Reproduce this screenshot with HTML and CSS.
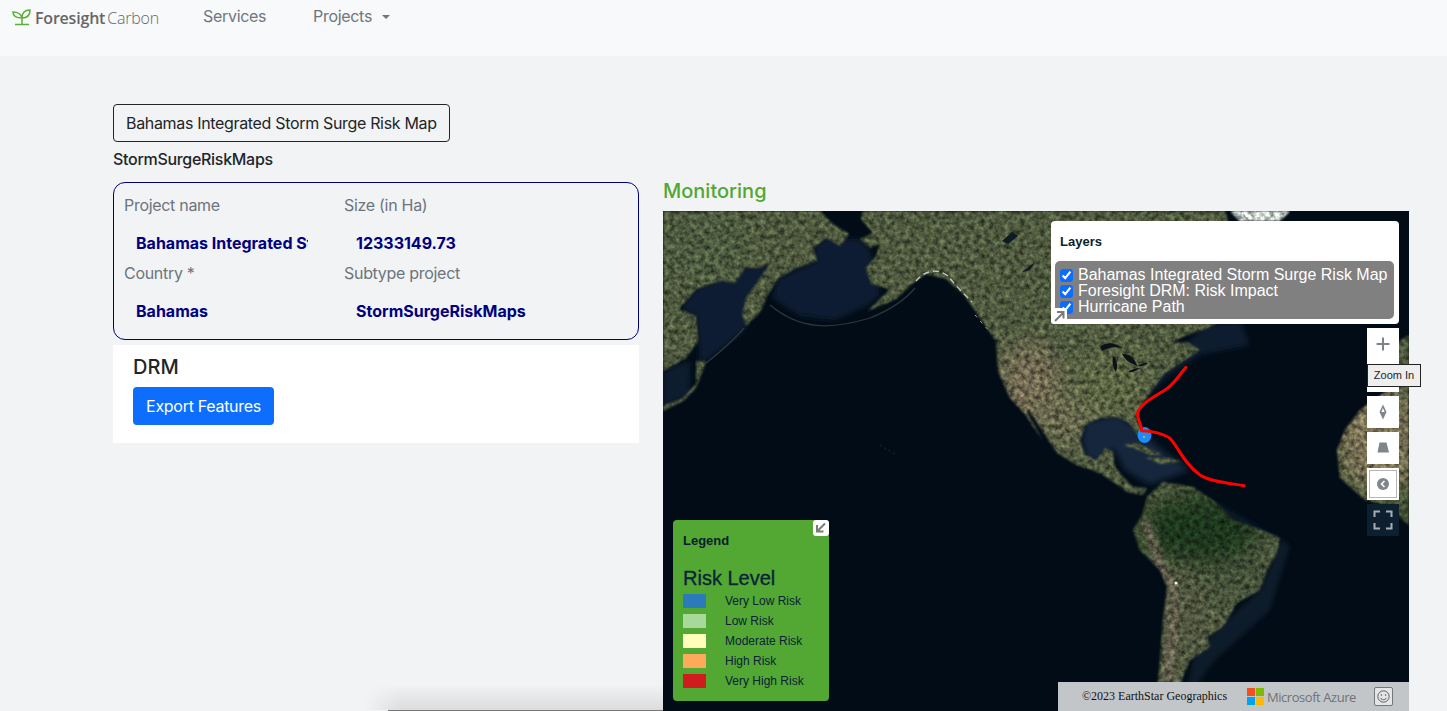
FILE: index.html
```html
<!DOCTYPE html>
<html lang="en">
<head>
    <meta charset="UTF-8">
    <meta name="viewport" content="width=device-width, initial-scale=1.0">
    <title>Foresight Carbon</title>
    <link rel="stylesheet" href="styles.css">
</head>
<body>

    <nav class="navbar">
        <a class="brand">
            <svg class="brand-icon" viewBox="0 0 20 18" width="20" height="18">
                <path d="M10 9 C9 5 6 3 1 3 C1 7 4 9 10 9 Z M10 9 C10 4 13 1 18 1 C18 6 15 9 10 9 Z M10 9 V15 M3 15.5 H17" fill="none" stroke="#5cb038" stroke-width="1.5"/>
            </svg>
            <span class="brand-bold">Foresight</span><span class="brand-thin">Carbon</span>
        </a>
        <a class="nav-link services">Services</a>
        <a class="nav-link">Projects <span class="caret"></span></a>
    </nav>

    <main class="main">
        <section class="left-col">
            <div class="title-box">Bahamas Integrated Storm Surge Risk Map</div>
            <div class="subtype">StormSurgeRiskMaps</div>

            <div class="info-card">
                <div class="info-item">
                    <label>Project name</label>
                    <div class="info-value">Bahamas Integrated Storm Surge Risk Map</div>
                </div>
                <div class="info-item">
                    <label>Size (in Ha)</label>
                    <div class="info-value">12333149.73</div>
                </div>
                <div class="info-item">
                    <label>Country *</label>
                    <div class="info-value">Bahamas</div>
                </div>
                <div class="info-item">
                    <label>Subtype project</label>
                    <div class="info-value">StormSurgeRiskMaps</div>
                </div>
            </div>

            <div class="drm-box">
                <h2>DRM</h2>
                <button type="button" class="btn-export">Export Features</button>
            </div>
        </section>

        <section class="right-col">
            <h3 class="monitoring">Monitoring</h3>
            <div class="map">
                <svg class="map-img" viewBox="663 211 746 500" width="746" height="500">
                    <defs>
                        <mask id="land" maskUnits="userSpaceOnUse" x="663" y="211" width="746" height="500">
                            <g fill="#fff" filter="url(#blur1)">
                                <path d="M663 211 L820 211 L833 224 L849 234 L840 246 L826 238 L813 248 L817 261 L796 268 L778 278 L766 298 L761 311 L746 326 L742 314 L746 298 L760 278 L770 263 L758 268 L745 268 L735 283 L720 281 L696 289 L679 309 L696 316 L698 341 L686 358 L663 371 Z"/>
                                <path d="M706 361 L696 361 L696 384 L683 398 L663 406 L663 411 L683 401 L696 388 L703 370 Z"/>
                                <path d="M863 211 L861 219 L873 233 L860 239 L870 248 L880 244 L876 256 L866 268 L871 284 L890 289 L868 311 L896 299 L913 283 L926 274 L946 279 L963 294 L980 318 L996 341 L998 371 L1010 398 L1025 414 L1043 441 L1027 412 L1029 410 L1057 453 L1077 465 L1100 473 L1115 483 L1127 492 L1143 495 L1147 488 L1133 487 L1123 477 L1115 467 L1113 452 L1105 448 L1097 460 L1085 455 L1080 440 L1085 425 L1100 418 L1117 417 L1128 422 L1138 435 L1141 430 L1136 417 L1140 407 L1152 390 L1163 375 L1180 363 L1200 350 L1187 342 L1170 343 L1187 335 L1208 328 L1217 323 L1230 300 L1240 260 L1225 211 Z"/>
                                <path d="M1163 482 L1193 487 L1217 503 L1233 520 L1257 528 L1280 538 L1277 553 L1267 570 L1260 590 L1237 603 L1223 627 L1207 637 L1210 647 L1190 660 L1183 677 L1173 711 L1155 711 L1160 660 L1163 620 L1167 587 L1160 570 L1140 550 L1133 530 L1143 513 L1147 497 Z"/>
                                <path d="M1409 335 L1398 342 L1385 392 L1360 410 L1345 430 L1337 450 L1340 478 L1365 500 L1385 505 L1409 525 Z"/>
                                <path d="M1123 445 L1137 443 L1150 449 L1163 455 L1150 455 L1136 449 Z"/>
                                <path d="M1145 458 L1170 458 L1182 462 L1160 464 Z"/>
                                <path d="M1230 211 L1290 211 L1280 221 L1240 221 Z"/>
                            </g>
                        </mask>
                        <filter id="terrain" x="0" y="0" width="100%" height="100%" color-interpolation-filters="sRGB">
                            <feTurbulence type="fractalNoise" baseFrequency=".2" numOctaves="4" seed="7" result="noise"/>
                            <feColorMatrix in="noise" type="matrix" values=".75 0 0 0 .12  .75 0 0 0 .12  .75 0 0 0 .12  0 0 0 0 1" result="gray"/>
                            <feBlend in="SourceGraphic" in2="gray" mode="multiply" result="mix"/>
                            <feComponentTransfer in="mix" result="lit">
                                <feFuncR type="linear" slope="1.75"/>
                                <feFuncG type="linear" slope="1.8"/>
                                <feFuncB type="linear" slope="1.75"/>
                            </feComponentTransfer>
                            <feComposite in="lit" in2="SourceAlpha" operator="in"/>
                        </filter>
                        <filter id="blur05"><feGaussianBlur stdDeviation=".6"/></filter>
                        <filter id="blur1"><feGaussianBlur stdDeviation=".9"/></filter>
                        <filter id="blur3"><feGaussianBlur stdDeviation="3"/></filter>
                        <filter id="blur12" x="-30%" y="-30%" width="160%" height="160%"><feGaussianBlur stdDeviation="12"/></filter>
                    </defs>

                    <rect x="663" y="211" width="746" height="500" fill="#020c16"/>

                    <!-- shallow water -->
                    <g filter="url(#blur3)" fill="#101e30">
                        <path d="M813 248 L826 238 L860 239 L870 250 L880 295 L868 305 L835 320 L800 316 L772 298 L778 278 L817 261 Z"/>
                        <path d="M745 268 L770 263 L745 330 L700 365 L696 316 L680 309 L696 289 Z"/>
                        <path d="M663 371 L690 360 L690 395 L663 408 Z" fill="#0c1c2e"/>
                        <path d="M1082 440 L1085 422 L1117 415 L1140 430 L1165 452 L1190 470 L1150 485 L1125 470 L1113 448 L1098 462 L1085 456 Z" fill="#12263e"/>
                        <path d="M1205 325 L1240 320 L1250 345 L1200 355 L1170 375 L1150 395 L1142 410 L1138 400 L1160 370 Z" fill="#0c1c2e"/>
                        <path d="M1170 490 L1220 505 L1290 545 L1270 610 L1215 660 L1185 700 L1195 650 L1260 590 L1280 540 L1230 520 Z" fill="#0a1a2c"/>
                    </g>
                    <!-- island arcs -->
                    <g fill="none" stroke="#28383a" stroke-width="1.3" filter="url(#blur05)">
                        <path d="M770 305 C800 330 830 330 870 318 C890 310 905 300 915 288"/>
                        <path d="M744 328 C730 345 712 358 700 368"/>
                    </g>
                    <path d="M880 445 L886 449 L897 455" fill="none" stroke="#232c30" stroke-width="1" stroke-dasharray="2 3"/>

                    <!-- land colours, mottled by the filter -->
                    <g mask="url(#land)">
                        <g filter="url(#terrain)">
                            <rect x="663" y="211" width="746" height="500" fill="#5b6448"/>
                            <g filter="url(#blur12)">
                                <ellipse cx="710" cy="250" rx="45" ry="35" fill="#596648"/>
                                <ellipse cx="1030" cy="390" rx="30" ry="48" fill="#857760"/>
                                <ellipse cx="1060" cy="420" rx="40" ry="25" fill="#767358"/>
                                <ellipse cx="1110" cy="380" rx="40" ry="35" fill="#69704e"/>
                                <ellipse cx="1235" cy="570" rx="38" ry="40" fill="#505c42"/>
                                <ellipse cx="1200" cy="530" rx="62" ry="36" fill="#233c22"/>
                                <ellipse cx="1185" cy="620" rx="24" ry="50" fill="#5c5e48"/>
                                <ellipse cx="1380" cy="440" rx="40" ry="50" fill="#8f8064"/>
                                <ellipse cx="1385" cy="505" rx="35" ry="15" fill="#415230"/>
                            </g>
                            <path d="M1145 520 L1160 565 L1175 590 L1172 640 L1165 711" stroke="#7d7062" stroke-width="8" fill="none" filter="url(#blur3)"/>
                            <path d="M1230 211 H1290 V221 H1230 Z" fill="#f0f2f2"/>
                        </g>
                    </g>
                    <g fill="none" stroke="#c4c9c4" filter="url(#blur05)">
                        <path d="M916 281 C925 270 938 268 948 276 C955 285 965 295 972 302" stroke-width="1.4" stroke-dasharray="6 4"/>
                        <path d="M975 315 L990 332" stroke-width=".8" stroke-dasharray="3 5"/>
                    </g>
                    <circle cx="1176" cy="583" r="1.6" fill="#f4f4f4"/>
                    <g fill="#0a1218">
                        <path d="M1100 347 C1106 342 1114 342 1122 348 C1114 346 1108 348 1102 351 Z"/>
                        <path d="M1113 356 C1117 358 1118 366 1116 372 C1113 368 1112 362 1113 356 Z"/>
                        <path d="M1122 354 C1130 353 1136 360 1137 366 C1130 363 1125 360 1122 354 Z"/>
                        <path d="M1128 372 C1132 369 1136 368 1140 368 C1136 371 1132 373 1128 372 Z"/>
                        <path d="M1138 366 C1141 363 1145 363 1148 363 C1145 366 1141 366 1138 366 Z"/>
                    </g>
                    <path d="M1002 241 L1012 232 L1018 236 L1008 244 Z M1022 272 L1035 262 L1030 270 Z" fill="#0a1a24" filter="url(#blur05)"/>

                    <!-- storm surge extent and hurricane path -->
                    <ellipse cx="1144.5" cy="435" rx="7" ry="8" fill="#1e8cf5"/>
                    <circle cx="1144" cy="437" r="1" fill="#e8b030"/>
                    <path transform="translate(1000 300) scale(.3333)" d="M558 202 C530 235 520 255 495 270 C460 292 425 310 414 335 C408 355 425 370 425 392 C450 392 490 400 510 415 C535 440 550 490 600 525 C630 545 690 550 733 557" fill="none" stroke="#ff0000" stroke-width="9" stroke-linecap="round" stroke-linejoin="round"/>
                </svg>

                <div class="layers-panel">
                    <div class="panel-title">Layers</div>
                    <div class="layers-list">
                        <label class="layer-row"><input type="checkbox" checked>Bahamas Integrated Storm Surge Risk Map</label>
                        <label class="layer-row"><input type="checkbox" checked>Foresight DRM: Risk Impact</label>
                        <label class="layer-row"><input type="checkbox" checked>Hurricane Path</label>
                    </div>
                    <span class="corner-btn layers-toggle">
                        <svg viewBox="0 0 16 16" width="16" height="16"><path d="M4 13 L12 5 M6 4 H12.5 V10.5" fill="none" stroke="#7a7a7a" stroke-width="2"/></svg>
                    </span>
                </div>

                <div class="controls">
                    <div class="zoom-group">
                        <button type="button" class="ctrl-btn">
                            <svg viewBox="0 0 32 32" width="32" height="32"><path d="M16 9.5 V22.5 M9.5 16 H22.5" stroke="#80858b" stroke-width="2"/></svg>
                        </button>
                        <button type="button" class="ctrl-btn"></button>
                    </div>
                    <button type="button" class="ctrl-btn">
                        <svg viewBox="0 0 32 32" width="32" height="32"><path d="M16 8.5 L19.5 16 L16 23.5 L12.5 16 Z" fill="#80858b"/><path d="M16 12 L17.6 16 H14.4 Z" fill="#fff"/></svg>
                    </button>
                    <button type="button" class="ctrl-btn">
                        <svg viewBox="0 0 32 32" width="32" height="32"><path d="M12.5 10.5 H19.5 L22 20.5 H10.5 Z" fill="#80858b"/></svg>
                    </button>
                    <button type="button" class="ctrl-btn ctrl-style">
                        <svg viewBox="0 0 32 32" width="32" height="32"><circle cx="16" cy="16" r="6" fill="#80858b"/><path d="M17.5 13 L14.5 16 L17.5 19" fill="none" stroke="#fff" stroke-width="1.6"/></svg>
                    </button>
                    <button type="button" class="ctrl-btn ctrl-dark">
                        <svg viewBox="0 0 32 32" width="32" height="32"><path d="M7.5 13 V7.5 H13 M19 7.5 H24.5 V13 M24.5 19 V24.5 H19 M13 24.5 H7.5 V19" fill="none" stroke="#a9adb2" stroke-width="2"/></svg>
                    </button>
                    <div class="tooltip">Zoom In</div>
                </div>

                <div class="legend">
                    <div class="panel-title">Legend</div>
                    <div class="legend-heading">Risk Level</div>
                    <div class="legend-row"><span class="swatch very-low"></span>Very Low Risk</div>
                    <div class="legend-row"><span class="swatch low"></span>Low Risk</div>
                    <div class="legend-row"><span class="swatch moderate"></span>Moderate Risk</div>
                    <div class="legend-row"><span class="swatch high"></span>High Risk</div>
                    <div class="legend-row"><span class="swatch very-high"></span>Very High Risk</div>
                    <span class="corner-btn legend-toggle">
                        <svg viewBox="0 0 16 16" width="16" height="16"><path d="M12 3.5 L4.5 11 M4 5 V11.5 H10.5" fill="none" stroke="#7a7a7a" stroke-width="2"/></svg>
                    </span>
                </div>

                <div class="attribution">
                    <span class="copyright">©2023 EarthStar Geographics</span>
                    <svg class="ms-logo" viewBox="0 0 17 17" width="17" height="17">
                        <rect width="8" height="8" fill="#f25022"/>
                        <rect x="9" width="8" height="8" fill="#7fba00"/>
                        <rect y="9" width="8" height="8" fill="#00a4ef"/>
                        <rect x="9" y="9" width="8" height="8" fill="#ffb900"/>
                    </svg>
                    <span class="azure">Microsoft Azure</span>
                    <span class="feedback">
                        <svg viewBox="0 0 18 18" width="17" height="17"><circle cx="9" cy="9" r="6" fill="none" stroke="#555" stroke-width="1"/><circle cx="6.8" cy="7.5" r=".8" fill="#555"/><circle cx="11.2" cy="7.5" r=".8" fill="#555"/><path d="M5.8 10.5 C7 13 11 13 12.2 10.5" fill="none" stroke="#555"/></svg>
                    </span>
                </div>
            </div>
        </section>
    </main>

    <div class="bottom-shadow"></div>

</body>
</html>
```

FILE: styles.css
```css
* {
    box-sizing: border-box;
}
html, body {
    height: 100%;
}
body {
    font-family: 'Inter', 'Liberation Sans', sans-serif;
    font-size: 16px;
    letter-spacing: -0.3px;
    background-color: #f2f3f5;
    color: #212529;
    margin: 0;
    overflow: hidden;
    position: relative;
}

/* navbar */
.navbar {
    height: 56px;
    background-color: #f8f9fb;
    display: flex;
    align-items: flex-start;
    padding: 6px 0 0 12px;
}
.brand {
    display: flex;
    align-items: center;
    width: 191px;
    height: 23px;
    font-family: 'Open Sans', sans-serif;
    font-size: 16px;
    letter-spacing: -0.2px;
    color: #666;
}
.brand-icon {
    margin: 0 3px 0 0;
}
.brand-bold {
    font-weight: 600;
    margin-right: 2px;
}
.brand-thin {
    font-weight: 300;
}
.nav-link {
    color: #6f767d;
    line-height: 20px;
}
.services {
    width: 110px;
}
.caret {
    display: inline-block;
    margin-left: 6px;
    vertical-align: 3px;
    border-top: 4.8px solid #6f767d;
    border-left: 4.8px solid transparent;
    border-right: 4.8px solid transparent;
}

/* page columns */
.main {
    display: flex;
    gap: 24px;
    padding: 48px 38px 0 113px;
}
.left-col {
    width: 526px;
    flex-shrink: 0;
}
.right-col {
    width: 746px;
    flex-shrink: 0;
    padding-top: 75px;
}
.title-box {
    display: inline-block;
    height: 38px;
    line-height: 36px;
    padding: 0 12px;
    border: 1px solid #212529;
    border-radius: 4px;
    white-space: nowrap;
    letter-spacing: -0.33px;
}
.subtype {
    margin-top: 7px;
    line-height: 20px;
    font-weight: 500;
}

/* project details */
.info-card {
    margin-top: 13px;
    height: 158px;
    border: 1px solid #000080;
    border-radius: 12px;
    padding: 10px;
    display: grid;
    grid-template-columns: 220px 220px;
    grid-auto-rows: 68px;
}
.info-item label {
    display: block;
    color: #6c757d;
    line-height: 24px;
}
.info-value {
    margin: 16px 0 0 12px;
    width: 172px;
    line-height: 20px;
    font-weight: 700;
    letter-spacing: 0;
    color: #000080;
    white-space: nowrap;
    overflow: hidden;
}
.info-item:nth-child(even) .info-value {
    width: 190px;
}
.drm-box {
    margin-top: 5px;
    height: 98px;
    background-color: #fff;
    padding: 10px 20px;
}
.drm-box h2 {
    margin: 0;
    font-size: 20px;
    font-weight: 500;
    line-height: 24px;
    letter-spacing: 0;
}
.btn-export {
    display: block;
    margin-top: 8px;
    height: 38px;
    width: 141px;
    background-color: #0d6efd;
    color: #fff;
    border: none;
    border-radius: 4px;
    font-family: inherit;
    font-size: 16px;
    letter-spacing: -0.3px;
}

/* map */
.monitoring {
    margin: 0 0 8px;
    font-size: 20px;
    font-weight: 500;
    line-height: 24px;
    letter-spacing: 0;
    color: #52a82f;
}
.map {
    position: relative;
    width: 746px;
    height: 500px;
    background-color: #020c16;
    letter-spacing: 0;
}
.map-img {
    position: absolute;
    left: 0;
    top: 0;
    display: block;
}
.panel-title {
    font-family: 'Liberation Sans', sans-serif;
    font-size: 13px;
    font-weight: 700;
    color: #0b1d2e;
    line-height: 16px;
}
.layers-panel {
    position: absolute;
    left: 388px;
    top: 10px;
    width: 348px;
    height: 103px;
    background-color: #fff;
    border-radius: 4px;
    padding: 13px 5px 5px 4px;
    font-family: 'Liberation Sans', sans-serif;
}
.layers-panel .panel-title {
    margin-left: 5px;
}
.layers-list {
    margin-top: 11px;
    height: 58px;
    padding: 6px 5px;
    background-color: #808080;
    border-radius: 5px;
    color: #fff;
    font-size: 16px;
}
.layer-row {
    display: flex;
    align-items: center;
    height: 16px;
    white-space: nowrap;
}
.layer-row input {
    margin: 0 5px 0 0;
    width: 13px;
    height: 13px;
    accent-color: #0d6efd;
}
.corner-btn {
    position: absolute;
    width: 16px;
    height: 16px;
    background-color: #fff;
    border-radius: 3px;
}
.corner-btn svg {
    display: block;
}
.layers-toggle {
    left: 0;
    bottom: 0;
}
.controls {
    position: absolute;
    left: 704px;
    top: 117px;
    display: flex;
    flex-direction: column;
    gap: 4px;
    width: 32px;
}
.zoom-group {
    display: flex;
    flex-direction: column;
}
.ctrl-btn {
    display: block;
    width: 32px;
    height: 32px;
    padding: 0;
    border: none;
    background-color: #fff;
}
.ctrl-btn svg {
    display: block;
}
.ctrl-style {
    border: 1px solid #fff;
    outline: 1px solid #b5b5b5;
    outline-offset: -3px;
}
.ctrl-style svg {
    margin: -1px;
}
.ctrl-dark {
    background-color: #0c2030;
}
.tooltip {
    position: absolute;
    left: 0;
    top: 36px;
    width: 54px;
    height: 23px;
    background-color: #eeeeee;
    border: 1px solid #222;
    font-family: 'Liberation Sans', sans-serif;
    font-size: 11px;
    line-height: 21px;
    text-align: center;
    white-space: nowrap;
}
.legend {
    position: absolute;
    left: 10px;
    top: 309px;
    width: 156px;
    height: 181px;
    background-color: #52a832;
    border-radius: 4px;
    padding: 13px 10px;
    font-family: 'Liberation Sans', sans-serif;
    color: #0b2238;
}
.legend-heading {
    margin-top: 17px;
    margin-bottom: 1px;
    font-size: 20px;
    line-height: 24px;
    -webkit-text-stroke: 0.3px #0b2238;
}
.legend-row {
    display: flex;
    align-items: center;
    height: 20px;
    font-size: 12px;
    white-space: nowrap;
}
.swatch {
    width: 23px;
    height: 14px;
    margin-right: 19px;
}
.very-low { background-color: #2b7bba; }
.low { background-color: #a6d99a; }
.moderate { background-color: #ffffbb; }
.high { background-color: #fdaa5a; }
.very-high { background-color: #d01c1c; }
.legend-toggle {
    right: 0;
    top: 0;
}
.attribution {
    position: absolute;
    right: 0;
    bottom: 0;
    width: 351px;
    height: 29px;
    background-color: #c3c6c9;
    display: flex;
    align-items: center;
    padding-left: 24px;
}
.copyright {
    width: 165px;
    font-family: 'Liberation Serif', serif;
    font-size: 12px;
    color: #111;
    white-space: nowrap;
}
.ms-logo {
    margin-right: 3px;
}
.azure {
    width: 107px;
    font-family: 'Open Sans', sans-serif;
    font-size: 13px;
    letter-spacing: -0.45px;
    color: #6f7276;
    white-space: nowrap;
}
.feedback {
    width: 19px;
    height: 19px;
    border: 1px solid #777;
    border-radius: 2px;
    background-color: #e4e5e6;
}
.feedback svg {
    display: block;
}
.bottom-shadow {
    position: absolute;
    left: 388px;
    bottom: 0;
    width: 275px;
    height: 1px;
    background-color: #777;
}
.bottom-shadow::before {
    content: '';
    position: absolute;
    left: -24px;
    right: 0;
    bottom: 1px;
    height: 26px;
    background: linear-gradient(to bottom, rgba(0,0,0,0), rgba(0,0,0,.09));
    -webkit-mask-image: linear-gradient(to right, transparent, #000 36px);
    mask-image: linear-gradient(to right, transparent, #000 36px);
}
```
